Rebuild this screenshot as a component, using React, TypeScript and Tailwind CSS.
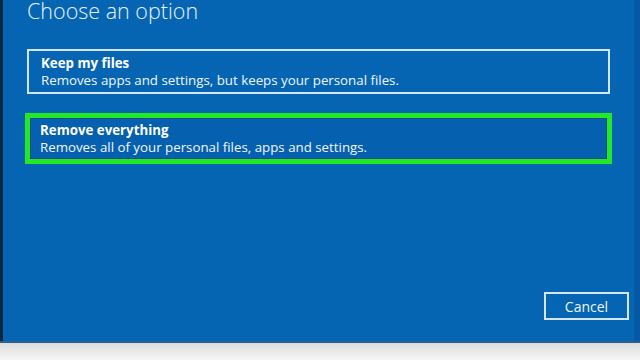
export default function App() {
  return (
    <div className="w-[640px] h-[360px] flex flex-col overflow-hidden" style={{ fontFamily: '"Open Sans", "Noto Sans", sans-serif' }}>
      <div className="h-[341px] flex bg-[#0565b3]">
        <div className="w-[3px] bg-[#0b2740]" />
        <div className="flex-1 flex flex-col pl-[24px] pr-[2px]">
          <h1 className="text-[21.5px] font-light leading-[22px] text-[#eaf3fb]">Choose an option</h1>
          <div className="mt-[27px] w-[583px] h-[45px] border-2 border-[#d3e5f6] pl-[12px] pt-[4px] flex flex-col">
            <div className="text-[13.3px] font-bold leading-[17px] text-white">Keep my files</div>
            <div className="text-[13.3px] leading-[17px] text-[#f2f7fc]">Removes apps and settings, but keeps your personal files.</div>
          </div>
          <div className="mt-[19px] ml-[-2px] w-[587px] h-[51px] border-[5px] border-[#22e926]">
            <div className="h-full border border-[#0a4a8a] bg-[#0660b0] pl-[9px] pt-[3px] flex flex-col">
              <div className="text-[13.3px] font-bold leading-[17px] text-white">Remove everything</div>
              <div className="text-[13.3px] leading-[17px] text-[#f2f7fc]">Removes all of your personal files, apps and settings.</div>
            </div>
          </div>
          <div className="mt-auto mb-[21px] flex justify-end pr-[3px]">
            <div className="w-[85px] h-[28px] border-2 border-[#d3e5f6] flex items-center justify-center text-[14px] text-[#eef5fc]">Cancel</div>
          </div>
        </div>
        <div className="w-[6px] bg-[#0558a3]" />
      </div>
      <div className="h-[2px] bg-[#2a5f8f]" />
      <div className="flex-1 bg-gradient-to-b from-[#dcdcdc] to-[#f6f6f6]" />
    </div>
  );
}
